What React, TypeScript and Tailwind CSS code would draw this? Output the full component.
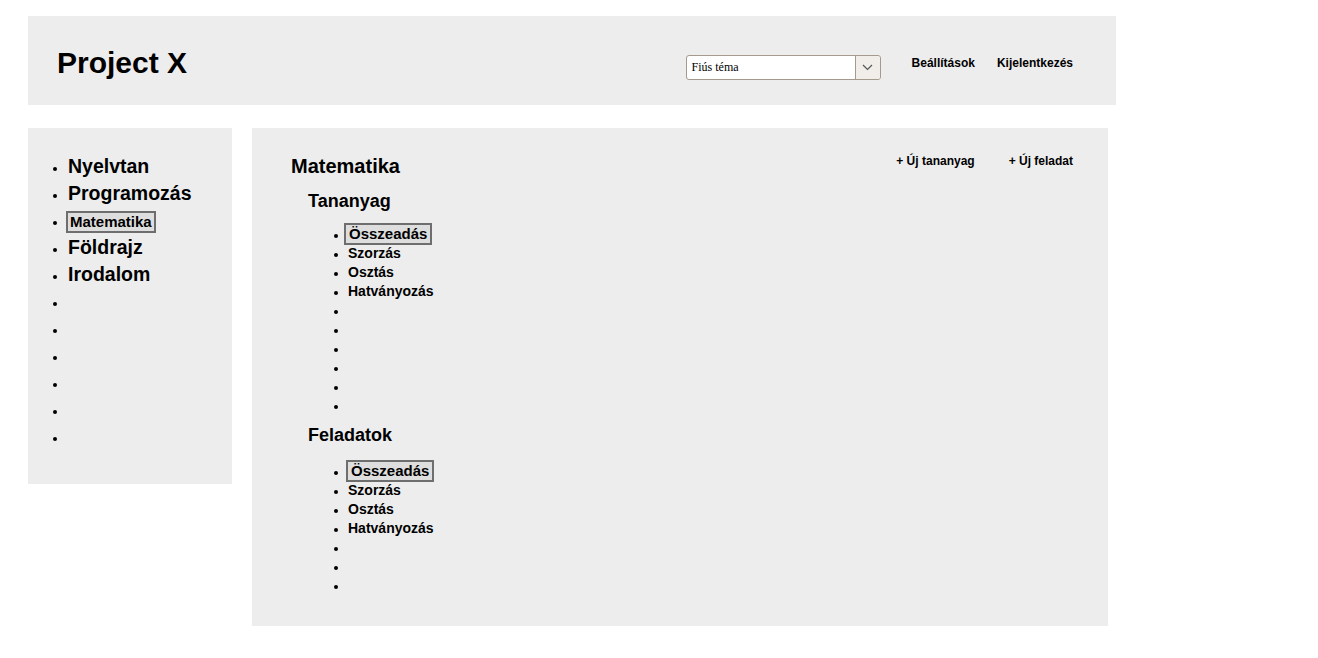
const subjects = ["Nyelvtan", "Programozás", "Matematika", "Földrajz", "Irodalom", "", "", "", "", "", ""];
const lessons = ["Összeadás", "Szorzás", "Osztás", "Hatványozás", "", "", "", "", "", ""];
const tasks = ["Összeadás", "Szorzás", "Osztás", "Hatványozás", "", "", ""];

function Chevron() {
  return (
    <svg width="11" height="7" viewBox="0 0 11 7" fill="none">
      <path d="M1 1l4.5 4.5L10 1" stroke="#555" strokeWidth="1.2" />
    </svg>
  );
}

function ThemeSelect() {
  return (
    <div className="flex h-[25px] w-[195px] rounded-[3px] border border-[#a59a8e] bg-white">
      <div className="flex-1 pl-[5px] text-[12px] leading-[23px] text-black font-['Liberation_Serif',serif]">Fiús téma</div>
      <div className="flex w-[25px] items-center justify-center rounded-r-[3px] border-l border-[#a59a8e] bg-[#f1eee9]">
        <Chevron />
      </div>
    </div>
  );
}

function Boxed({ text, size }: { text: string; size: string }) {
  return (
    <span className={`inline-block border-2 border-[#6e6e6e] bg-[#dedede] leading-[18px] ${size}`}>{text}</span>
  );
}

function ItemList({ items, shift }: { items: string[]; shift: string }) {
  return (
    <ul className="list-disc pl-[40px] text-[14px] font-bold marker:text-[12px]">
      {items.map((it, i) =>
        i === 0 ? (
          <li key={i} className="h-[21px] leading-[22px]">
            <Boxed text={it} size={`text-[15px] px-[3px] ${shift}`} />
          </li>
        ) : (
          <li key={i} className="h-[19px] leading-[19px]">{it}</li>
        )
      )}
    </ul>
  );
}

export default function App() {
  return (
    <div className="min-h-screen bg-white pl-[28px] pt-[16px] text-black font-['Liberation_Sans',Arial,sans-serif]">
      <header className="flex h-[89px] w-[1088px] items-start bg-[#ededed] pl-[29px] pr-[43px]">
        <h1 className="mt-[29px] text-[30px] font-bold leading-[36px]">Project X</h1>
        <div className="ml-auto mt-[39px] flex items-start">
          <ThemeSelect />
          <a className="ml-[31px] mt-[1px] text-[12px] font-bold leading-[14px]">Beállítások</a>
          <a className="ml-[22px] mt-[1px] text-[12px] font-bold leading-[14px]">Kijelentkezés</a>
        </div>
      </header>

      <div className="mt-[23px] flex items-start gap-[20px]">
        <aside className="w-[204px] bg-[#ededed] pb-[34px] pt-[25px]">
          <ul className="list-disc pl-[40px] font-bold marker:text-[13px]">
            {subjects.map((s, i) => (
              <li key={i} className="h-[27px] leading-[27px] text-[19.5px]">
                {s === "Matematika" ? <Boxed text={s} size="text-[15px] px-[2px] -ml-[2px]" /> : s}
              </li>
            ))}
          </ul>
        </aside>

        <main className="w-[856px] bg-[#ededed] pb-[31px] pl-[39px] pr-[35px] pt-[26px]">
          <div className="flex items-start justify-between">
            <h2 className="text-[20px] font-bold leading-[24px]">Matematika</h2>
            <div className="flex gap-[34px] text-[12px] font-bold leading-[14px]">
              <a>+ Új tananyag</a>
              <a>+ Új feladat</a>
            </div>
          </div>
          <div className="pl-[17px]">
            <h3 className="mt-[12px] text-[18px] font-bold leading-[22px]">Tananyag</h3>
            <div className="mt-[11px]">
              <ItemList items={lessons} shift="-ml-[4px]" />
            </div>
            <h3 className="mt-[9px] text-[18px] font-bold leading-[22px]">Feladatok</h3>
            <div className="mt-[14px]">
              <ItemList items={tasks} shift="-ml-[2px]" />
            </div>
          </div>
        </main>
      </div>
    </div>
  );
}
